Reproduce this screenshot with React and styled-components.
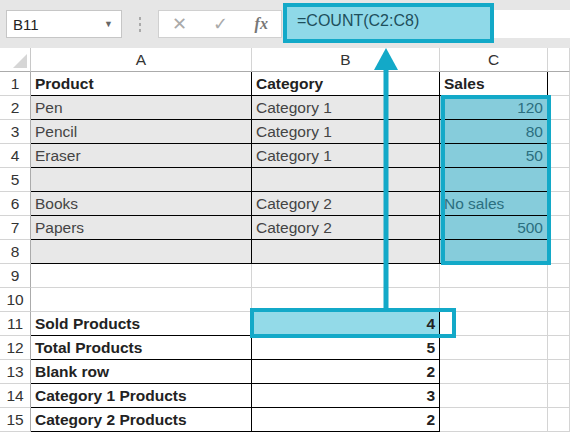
import React from "react";
import styled, { createGlobalStyle } from "styled-components";

const G = createGlobalStyle`
  body{margin:0;background:#fff;font-family:"Liberation Sans",Arial,sans-serif;}
`;
const Page = styled.div`position:relative;width:570px;height:438px;overflow:hidden;background:#fff;`;
const Toolbar = styled.div`height:48px;background:#e6e6e6;display:flex;align-items:center;padding-left:6px;gap:0;`;
const NameBox = styled.div`width:116px;height:28px;background:#fff;border:1px solid #c6c6c6;box-sizing:border-box;display:flex;align-items:center;justify-content:space-between;padding:0 8px 0 6px;font-size:15px;color:#222;`;
const Dots = styled.div`width:36px;display:flex;flex-direction:column;align-items:center;gap:3px;
  span{width:2px;height:3px;background:#aaa;}`;
const IconBox = styled.div`width:124px;height:28px;background:#fff;border:1px solid #d0d0d0;box-sizing:border-box;display:flex;align-items:center;justify-content:space-around;color:#aaa;font-size:18px;`;
const Fx = styled.span`font-family:"Liberation Serif",serif;font-style:italic;font-weight:bold;color:#777;font-size:16px;`;
const Formula = styled.div`flex:1;height:28px;background:#fff;margin-left:3px;`;

const Grid = styled.div`display:grid;grid-template-columns:31px 221px 188px 108px 22px;grid-auto-rows:24px;`;
const Corner = styled.div`background:#fff;border-right:1px solid #c8c8c8;border-bottom:1px solid #ababab;position:relative;
  &:after{content:"";position:absolute;right:3px;bottom:3px;border-left:14px solid transparent;border-bottom:14px solid #d6d6d6;}`;
const ColHead = styled.div`background:#fff;border-right:1px solid #d4d4d4;border-bottom:1px solid #ababab;display:flex;align-items:center;justify-content:center;font-size:15.5px;color:#333;`;
const RowHead = styled.div`border-right:1px solid #ababab;border-bottom:1px solid #d4d4d4;display:flex;align-items:center;justify-content:center;font-size:15.5px;color:#333;`;
const Cell = styled.div`box-sizing:border-box;font-size:15.5px;padding:0 4px;display:flex;align-items:flex-end;padding-bottom:2px;
  white-space:nowrap;overflow:visible;
  background:${p=>p.$bg||"#fff"};
  color:${p=>p.$c||"#111"};
  font-weight:${p=>p.$b?"bold":"normal"};
  justify-content:${p=>p.$r?"flex-end":"flex-start"};
  border-right:1px solid ${p=>p.$line?"#000":"#d4d4d4"};
  border-bottom:1px solid ${p=>p.$line?"#000":"#d4d4d4"};`;

const Hl = styled.div`position:absolute;box-sizing:border-box;border:4px solid #13a9c8;background:${p=>p.$fill||"transparent"};`;
const FormulaText = styled.div`position:absolute;left:297px;top:12px;font-size:16px;color:#1e4f5c;`;
const Arrow = styled.svg`position:absolute;left:370px;top:46px;`;

const rows = [
  ["Product","Category","Sales"],
  ["Pen","Category 1","120"],
  ["Pencil","Category 1","80"],
  ["Eraser","Category 1","50"],
  ["","",""],
  ["Books","Category 2","No sales"],
  ["Papers","Category 2","500"],
  ["","",""],
  null,null,
  ["Sold Products","4"],
  ["Total Products","5"],
  ["Blank row","2"],
  ["Category 1 Products","3"],
  ["Category 2 Products","2"],
];

export default function App(){
  return <Page><G/>
    <Toolbar>
      <NameBox>B11<span style={{fontSize:9,color:"#666"}}>▼</span></NameBox>
      <Dots><span/><span/><span/></Dots>
      <IconBox><span>✕</span><span>✓</span><Fx>fx</Fx></IconBox>
      <Formula/>
    </Toolbar>
    <Grid>
      <Corner/>
      {["A","B","C",""].map((c,i)=><ColHead key={i}>{c}</ColHead>)}
      {rows.map((r,i)=>{
        const n=i+1; const out=[<RowHead key={"h"+n}>{n}</RowHead>];
        if(!r){ for(let k=0;k<4;k++) out.push(<Cell key={n+"-"+k}/>); }
        else if(n<=8){
          const bg = n===1?"#fff":"#e8e8e8";
          const hd=n===1;
          out.push(<Cell key={n+"a"} $line $bg={bg} $b={hd} $c={hd?"#222":"#444"}>{r[0]}</Cell>);
          out.push(<Cell key={n+"b"} $line $bg={bg} $b={hd} $c={hd?"#222":"#444"}>{r[1]}</Cell>);
          out.push(<Cell key={n+"c"} $line $bg={hd?"#fff":"#86ccdb"} $b={hd} $r={!hd && r[2]!=="No sales"} $c={hd?"#222":"#2b6f80"}>{r[2]}</Cell>);
          out.push(<Cell key={n+"d"}/>);
        } else {
          out.push(<Cell key={n+"a"} $line $b $c="#222">{r[0]}</Cell>);
          out.push(<Cell key={n+"b"} $line $b $r $c="#222" $bg={n===11?"#93dae8":"#fff"}>{r[1]}</Cell>);
          out.push(<Cell key={n+"c"}/>);
          out.push(<Cell key={n+"d"}/>);
        }
        return out;
      })}
    </Grid>
    <Hl style={{left:283,top:3,width:211,height:40}} $fill="#8fd9e8"/>
    <FormulaText>=COUNT(C2:C8)</FormulaText>
    <Hl style={{left:441,top:95,width:110,height:170}}/>
    <Hl style={{left:250,top:308,width:206,height:30}}/>
    <Arrow width="32" height="264" viewBox="0 0 32 264">
      <polygon points="16,2 4,24 28,24" fill="#13a9c8"/>
      <rect x="13.5" y="22" width="5" height="242" fill="#13a9c8"/>
    </Arrow>
  </Page>;
}
